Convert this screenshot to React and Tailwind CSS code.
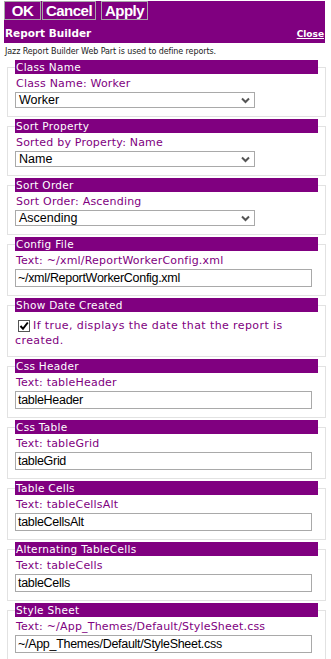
import React from 'react';

const sections = [
  { title: 'Class Name', label: 'Class Name: Worker', kind: 'select', value: 'Worker' },
  { title: 'Sort Property', label: 'Sorted by Property: Name', kind: 'select', value: 'Name' },
  { title: 'Sort Order', label: 'Sort Order: Ascending', kind: 'select', value: 'Ascending' },
  { title: 'Config File', label: 'Text: ~/xml/ReportWorkerConfig.xml', kind: 'text', value: '~/xml/ReportWorkerConfig.xml' },
  { title: 'Show Date Created', kind: 'check', label: 'If true, displays the date that the report is created.' },
  { title: 'Css Header', label: 'Text: tableHeader', kind: 'text', value: 'tableHeader' },
  { title: 'Css Table', label: 'Text: tableGrid', kind: 'text', value: 'tableGrid' },
  { title: 'Table Cells', label: 'Text: tableCellsAlt', kind: 'text', value: 'tableCellsAlt' },
  { title: 'Alternating TableCells', label: 'Text: tableCells', kind: 'text', value: 'tableCells' },
  { title: 'Style Sheet', label: 'Text: ~/App_Themes/Default/StyleSheet.css', kind: 'text', value: '~/App_Themes/Default/StyleSheet.css' },
];

const verdana = "font-['DejaVu_Sans',Verdana,sans-serif]";

function Chevron() {
  return (
    <svg width="9" height="7" viewBox="0 0 9 7" className="shrink-0">
      <path d="M1 1.5 L4.5 5 L8 1.5" fill="none" stroke="#555" strokeWidth="2" />
    </svg>
  );
}

function Field({ s }) {
  return (
    <fieldset className="border border-[#e2e2e2] px-[7px] pb-[8px] mb-[2px]">
      <legend className={`w-[303px] h-[14px] bg-[#800080] text-white text-[10.5px] leading-[14px] pl-[1px] tracking-[0.3px] ${verdana}`}>
        {s.title}
      </legend>
      {s.kind === 'check' ? (
        <div className={`pt-[6px] w-[296px] text-[#800080] text-[11px] leading-[15px] tracking-[0.4px] ${verdana}`}>
          <span className="inline-flex align-[-2px] ml-[3px] mr-[3px] w-[12px] h-[12px] border border-[#555] bg-white items-center justify-center">
            <svg width="10" height="10" viewBox="0 0 10 10">
              <path d="M1.5 5 L4 7.8 L8.8 1.5" fill="none" stroke="#000" strokeWidth="2" />
            </svg>
          </span>
          {s.label}
        </div>
      ) : (
        <>
          <div className={`pl-[1px] pt-[2px] h-[18px] text-[#800080] text-[11px] leading-[16px] tracking-[0.2px] ${verdana}`}>
            {s.label}
          </div>
          {s.kind === 'select' ? (
            <div className="w-[240px] h-[16px] border border-[#a9a9a9] bg-white flex items-center justify-between pl-[3px] pr-[4px] font-['Liberation_Sans',Arial,sans-serif] text-[12.5px] text-black">
              <span className="leading-[14px]">{s.value}</span>
              <Chevron />
            </div>
          ) : (
            <div className="w-[297px] h-[18px] border border-[#a9a9a9] bg-white flex items-center pl-[2px] font-['Liberation_Sans',Arial,sans-serif] text-[12.5px] tracking-[-0.3px] text-black">
              {s.value}
            </div>
          )}
        </>
      )}
    </fieldset>
  );
}

export default function App() {
  return (
    <div className="w-[331px] min-h-[659px] bg-white pl-[4px] pt-[1px]">
      {/* Toolbar and title */}
      <div className="w-[321px] bg-[#800080]">
        <div className="flex items-start gap-[1px] font-['Liberation_Sans',Arial,sans-serif] font-bold text-white text-[15px] tracking-[-0.5px]">
          <button className="w-[37px] h-[19px] border border-[#a8a8a8] leading-[16px] text-center">OK</button>
          <button className="w-[54px] h-[19px] border border-[#a8a8a8] leading-[16px] text-center">Cancel</button>
          <button className="ml-[4px] w-[47px] h-[19px] border border-[#a8a8a8] leading-[16px] text-center">Apply</button>
        </div>
        <div className={`flex items-end justify-between h-[23px] pb-[3px] pl-[1px] pr-[1px] text-white font-bold ${verdana}`}>
          <span className="text-[10.5px] leading-[14px]">Report Builder</span>
          <span className="text-[9px] leading-[12px] underline">Close</span>
        </div>
      </div>

      <div className="pl-[1px] pt-[4px] h-[17px] text-[8px] leading-[10px] text-[#222] font-['DejaVu_Sans',Tahoma,sans-serif] tracking-[-0.1px]">
        Jazz Report Builder Web Part is used to define reports.
      </div>

      <div className="pl-[3px] w-[322px]">
        {sections.map((s) => (
          <Field key={s.title} s={s} />
        ))}
      </div>
    </div>
  );
}
